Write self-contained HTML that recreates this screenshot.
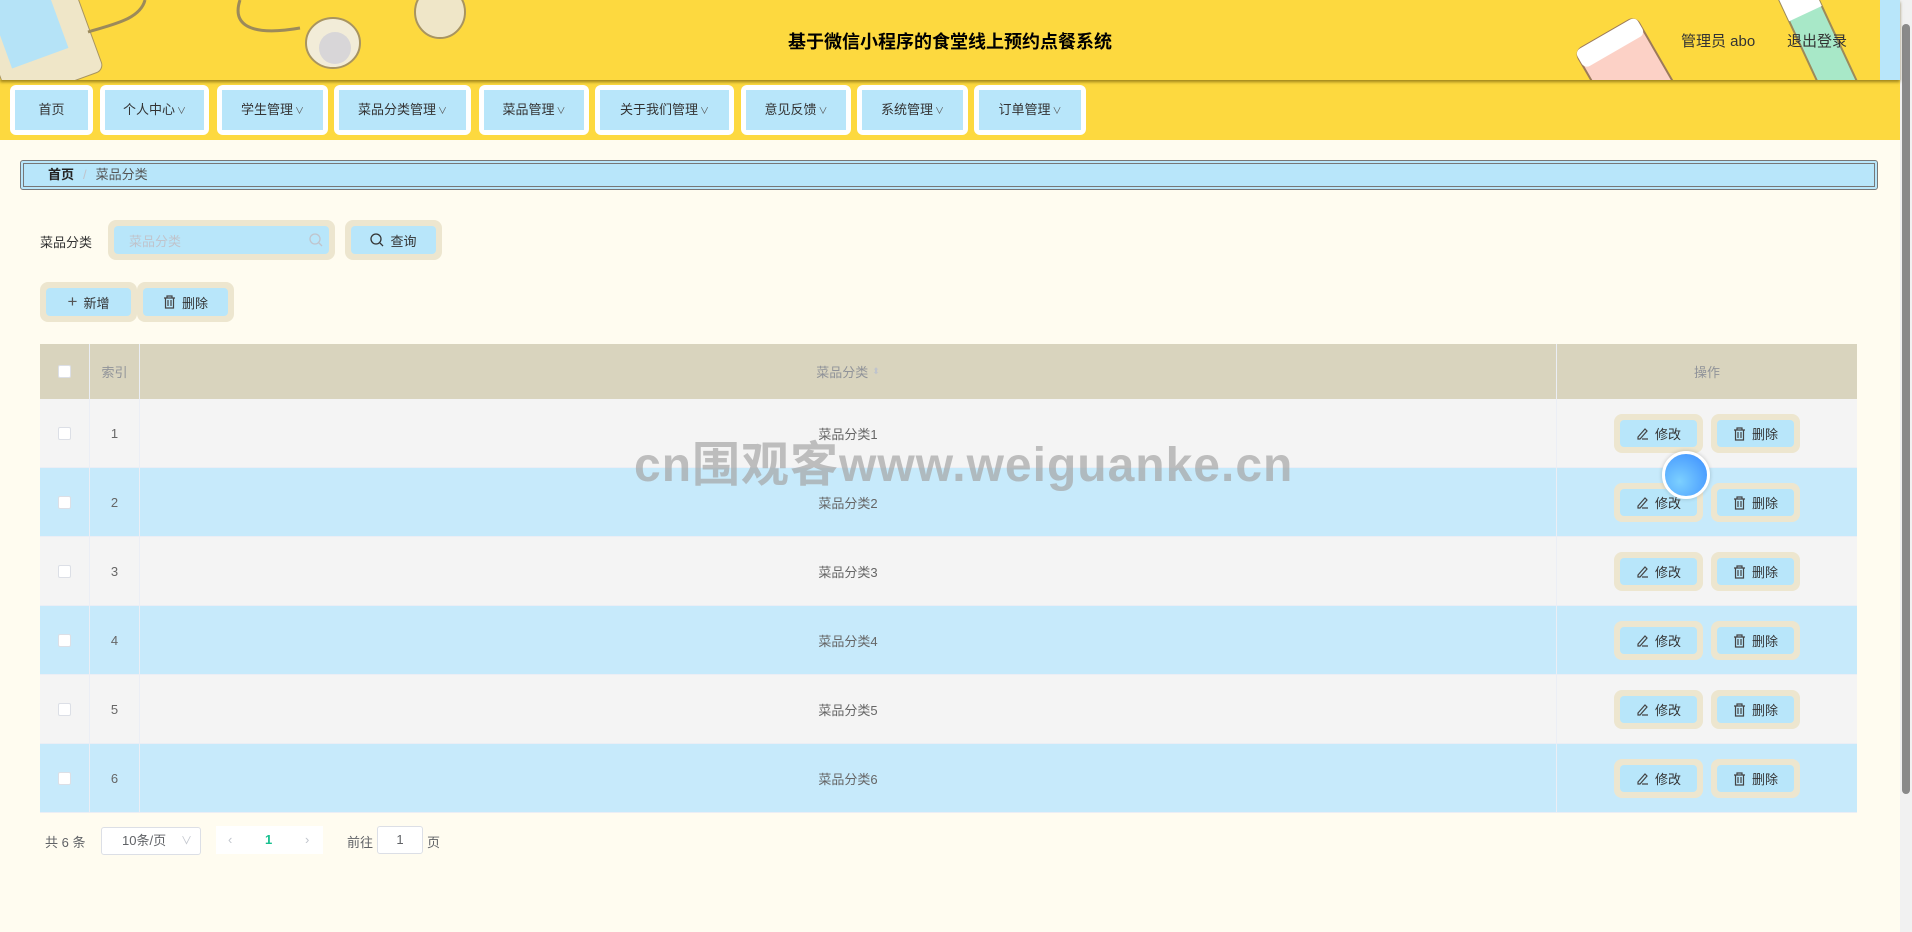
<!DOCTYPE html>
<html><head><meta charset="utf-8">
<style>
*{margin:0;padding:0;box-sizing:border-box}
body{width:1912px;height:932px;overflow:hidden;background:#fffcf0;font-family:"Liberation Sans","Noto Sans CJK SC",sans-serif;color:#333;position:relative}
.abs{position:absolute}
#hdr{left:0;top:0;width:1900px;height:80px;background:#fdd93f;box-shadow:0 2px 3px rgba(90,70,0,.6);overflow:hidden;z-index:2}
#nav{left:0;top:80px;width:1900px;height:60px;background:#fdd93f}
.ni{position:absolute;top:85px;height:50px;background:#fff;border-radius:6px;padding:5px}
.ni div{background:#b8e6fa;height:40px;line-height:40px;text-align:center;font-size:13px;color:#333}
.ni i{font-style:normal;font-size:9px;color:#555;margin-left:2px}
.btn{position:absolute;background:#ede6cf;border-radius:8px;padding:6px}
.btn div{background:#b8e6fa;border-radius:4px;height:100%;display:flex;align-items:center;justify-content:center;font-size:13px;color:#333;gap:6px}
.row{position:absolute;left:40px;width:1817px;height:69px}
.cell{position:absolute;top:0;height:100%;display:flex;align-items:center;justify-content:center;font-size:13px;color:#666}
.cb{width:13px;height:13px;background:#fff;border:1px solid #dcdfe6;border-radius:2px}
</style></head><body>
<div id="hdr" class="abs">
 <svg width="1900" height="80" style="position:absolute;left:0;top:0">
  <rect x="-10" y="-20" width="100" height="110" rx="8" fill="#efe6c8" stroke="#a89460" transform="rotate(-20 40 40)"/>
  <rect x="0" y="-10" width="60" height="70" fill="#b5e3f7" transform="rotate(-20 30 30)"/>
  <path d="M88 32 C110 25 140 20 145 0" stroke="#9c8a5a" stroke-width="3" fill="none"/>
  <path d="M240 0 C230 30 260 35 300 28" stroke="#9c8a5a" stroke-width="3" fill="none"/>
  <ellipse cx="333" cy="43" rx="27" ry="25" fill="#f2ecd8" stroke="#a89460" stroke-width="2"/>
  <circle cx="335" cy="48" r="16" fill="#d8d6d8"/>
  <ellipse cx="440" cy="12" rx="25" ry="26" fill="#efe6c8" stroke="#a89460" stroke-width="2"/>
  <g transform="rotate(-30 1620 60)"><rect x="1585" y="30" width="70" height="90" rx="8" fill="#fcd1c6" stroke="#9c7a5a" stroke-width="2"/><rect x="1585" y="30" width="70" height="20" rx="6" fill="#fff"/></g>
  <g transform="rotate(-25 1820 40)"><rect x="1800" y="-20" width="36" height="120" fill="#a8e8c8" stroke="#9c8a5a" stroke-width="2"/><rect x="1800" y="-20" width="36" height="30" fill="#fff"/></g>
  <rect x="1880" y="0" width="20" height="80" fill="#b8e6fa"/>
 </svg>
 <div class="abs" style="left:0;width:1900px;top:28px;text-align:center;font-size:18px;font-weight:bold;color:#000">基于微信小程序的食堂线上预约点餐系统</div>
 <div class="abs" style="left:1681px;top:30px;font-size:15px;color:#333">管理员 abo</div>
 <div class="abs" style="left:1787px;top:30px;font-size:15px;color:#333">退出登录</div>
</div>
<div id="nav" class="abs"></div>
<div class="ni" style="left:10px;width:83px"><div>首页</div></div>
<div class="ni" style="left:100px;width:109px"><div>个人中心<i>∨</i></div></div>
<div class="ni" style="left:217px;width:111px"><div>学生管理<i>∨</i></div></div>
<div class="ni" style="left:334px;width:137px"><div>菜品分类管理<i>∨</i></div></div>
<div class="ni" style="left:479px;width:110px"><div>菜品管理<i>∨</i></div></div>
<div class="ni" style="left:595px;width:139px"><div>关于我们管理<i>∨</i></div></div>
<div class="ni" style="left:741px;width:110px"><div>意见反馈<i>∨</i></div></div>
<div class="ni" style="left:857px;width:111px"><div>系统管理<i>∨</i></div></div>
<div class="ni" style="left:974px;width:112px"><div>订单管理<i>∨</i></div></div>

<div class="abs" style="left:20px;top:160px;width:1858px;height:30px;background:#b8e6fa;border:4px double #777;border-radius:3px;font-size:13px;line-height:22px;padding-left:24px">
 <b style="color:#222">首页</b><span style="color:#c0c4cc;margin:0 9px">/</span><span style="color:#555">菜品分类</span>
</div>

<div class="abs" style="left:40px;top:232px;font-size:13px;color:#333">菜品分类</div>
<div class="btn" style="left:108px;top:220px;width:227px;height:40px"><div style="justify-content:space-between;padding:0 6px 0 15px;color:#c0c4cc">菜品分类<svg width="14" height="14"><circle cx="6" cy="6" r="5" stroke="#c0c4cc" fill="none" stroke-width="1.3"/><path d="M10 10l3 3" stroke="#c0c4cc" stroke-width="1.3"/></svg></div></div>
<div class="btn" style="left:345px;top:220px;width:97px;height:40px"><div><svg width="14" height="14"><circle cx="6" cy="6" r="5" stroke="#333" fill="none" stroke-width="1.3"/><path d="M10 10l3 3" stroke="#333" stroke-width="1.3"/></svg>查询</div></div>
<div class="btn" style="left:40px;top:282px;width:97px;height:40px"><div><span style="font-size:17px;color:#555">+</span>新增</div></div>
<div class="btn" style="left:137px;top:282px;width:97px;height:40px"><div><svg width="13" height="14"><path d="M1 3h11M4 3V1h5v2M2.5 3v10h8V3M5 5v6M8 5v6" stroke="#444" fill="none" stroke-width="1.2"/></svg>删除</div></div>

<div class="row" style="top:344px;height:55px;background:#d9d4be">
 <div class="cell" style="left:0;width:50px;border-right:1px solid #ebeef5"><div class="cb"></div></div>
 <div class="cell" style="left:50px;width:50px;border-right:1px solid #ebeef5;color:#909399">索引</div>
 <div class="cell" style="left:100px;width:1417px;border-right:1px solid #ebeef5;color:#909399">菜品分类 <span style="font-size:9px;color:#c0c4cc;margin-left:4px">⬍</span></div>
 <div class="cell" style="left:1517px;width:300px;color:#909399">操作</div>
</div>
<div id="rows"></div>
<script>
var h='';for(var i=0;i<6;i++){var t=399+i*69,bg=i%2?'#c7eafb':'#f4f4f4';
h+='<div class="row" style="top:'+t+'px;background:'+bg+';border-bottom:1px solid #ebeef5">'+
'<div class="cell" style="left:0;width:50px;border-right:1px solid #ebeef5"><div class="cb"></div></div>'+
'<div class="cell" style="left:50px;width:50px;border-right:1px solid #ebeef5">'+(i+1)+'</div>'+
'<div class="cell" style="left:100px;width:1417px;border-right:1px solid #ebeef5">菜品分类'+(i+1)+'</div></div>'+
'<div class="btn" style="left:1614px;top:'+(t+15)+'px;width:89px;height:39px"><div><svg width="13" height="13"><path d="M2 10l7-8 2 2-7 8H2zM6 12h6" stroke="#444" fill="none" stroke-width="1.2"/></svg>修改</div></div>'+
'<div class="btn" style="left:1711px;top:'+(t+15)+'px;width:89px;height:39px"><div><svg width="13" height="14"><path d="M1 3h11M4 3V1h5v2M2.5 3v10h8V3M5 5v6M8 5v6" stroke="#444" fill="none" stroke-width="1.2"/></svg>删除</div></div>';}
document.getElementById('rows').innerHTML=h;
</script>

<div class="abs" style="left:634px;top:425px;font-size:48px;font-weight:bold;color:rgba(165,165,165,.7);letter-spacing:1px;white-space:nowrap">cn围观客www.weiguanke.cn</div>
<div class="abs" style="left:1662px;top:451px;width:48px;height:48px;border-radius:50%;background:radial-gradient(circle at 35% 65%,#7cd0ff,#3a8cff);border:3px solid #fff;box-shadow:0 0 4px rgba(0,0,0,.2)"></div>

<div class="abs" style="left:45px;top:832px;font-size:13px;color:#606266">共 6 条</div>
<div class="abs" style="left:101px;top:827px;width:100px;height:28px;background:#fff;border:1px solid #dcdfe6;border-radius:3px;font-size:13px;color:#606266;line-height:26px;padding-left:20px">10条/页<span style="position:absolute;right:8px;color:#c0c4cc;font-size:11px">∨</span></div>
<div class="abs" style="left:216px;top:826px;width:107px;height:28px;background:#fff;font-size:13px;line-height:28px">
 <span style="position:absolute;left:12px;color:#c0c4cc">‹</span><b style="position:absolute;left:49px;color:#19c08f">1</b><span style="position:absolute;left:89px;color:#c0c4cc">›</span></div>
<div class="abs" style="left:347px;top:832px;font-size:13px;color:#606266">前往</div>
<div class="abs" style="left:377px;top:826px;width:46px;height:28px;background:#fff;border:1px solid #dcdfe6;border-radius:3px;text-align:center;line-height:26px;font-size:13px;color:#606266">1</div>
<div class="abs" style="left:427px;top:832px;font-size:13px;color:#606266">页</div>

<div class="abs" style="left:1900px;top:0;width:12px;height:932px;background:#f1f1f1"></div>
<div class="abs" style="left:1902px;top:24px;width:8px;height:770px;background:#8a8a8a;border-radius:4px"></div>
</body></html>
